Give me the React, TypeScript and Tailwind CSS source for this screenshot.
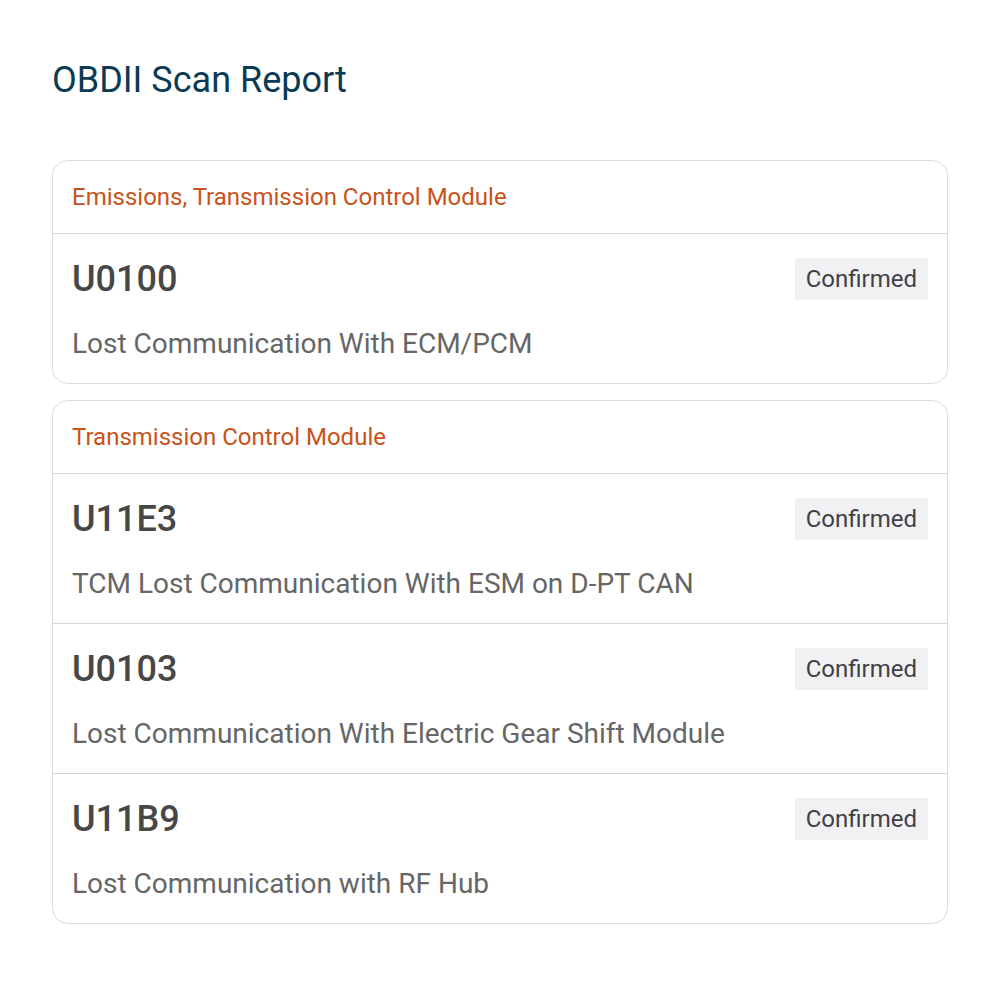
import React from "react";

type Dtc = { code: string; desc: string };
type Group = { title: string; items: Dtc[] };

const groups: Group[] = [
  {
    title: "Emissions, Transmission Control Module",
    items: [{ code: "U0100", desc: "Lost Communication With ECM/PCM" }],
  },
  {
    title: "Transmission Control Module",
    items: [
      { code: "U11E3", desc: "TCM Lost Communication With ESM on D-PT CAN" },
      { code: "U0103", desc: "Lost Communication With Electric Gear Shift Module" },
      { code: "U11B9", desc: "Lost Communication with RF Hub" },
    ],
  },
];

export default function App() {
  return (
    <div
      className="min-h-[1000px] w-[1000px] bg-white px-[52px] pt-[56px]"
      style={{ fontFamily: "Roboto, 'Liberation Sans', sans-serif" }}
    >
      <h1 className="text-[36px] leading-[48px] text-[#0b3a55] font-normal">OBDII Scan Report</h1>
      <div className="mt-[56px] flex flex-col gap-[16px]">
        {groups.map((g) => (
          <div key={g.title} className="rounded-[16px] border border-[#dcdcdc] overflow-hidden">
            <div className="h-[73px] flex items-center px-[19px] border-b border-[#d6d6d6]">
              <span className="text-[24px] text-[#c8531a]">{g.title}</span>
            </div>
            {g.items.map((it, i) => (
              <div
                key={it.code}
                className={
                  "px-[19px] pt-[24px] " +
                  (i < g.items.length - 1 ? "border-b border-[#d6d6d6] h-[150px]" : "h-[149px]")
                }
              >
                <div className="flex items-center justify-between h-[42px]">
                  <span className="text-[36px] font-medium text-[#474747]">{it.code}</span>
                  <span className="h-[42px] px-[11px] flex items-center bg-[#f1f1f4] text-[24px] text-[#3f3f46]">
                    Confirmed
                  </span>
                </div>
                <div className="mt-[26px] text-[28px] leading-[36px] text-[#666666]">{it.desc}</div>
              </div>
            ))}
          </div>
        ))}
      </div>
    </div>
  );
}
